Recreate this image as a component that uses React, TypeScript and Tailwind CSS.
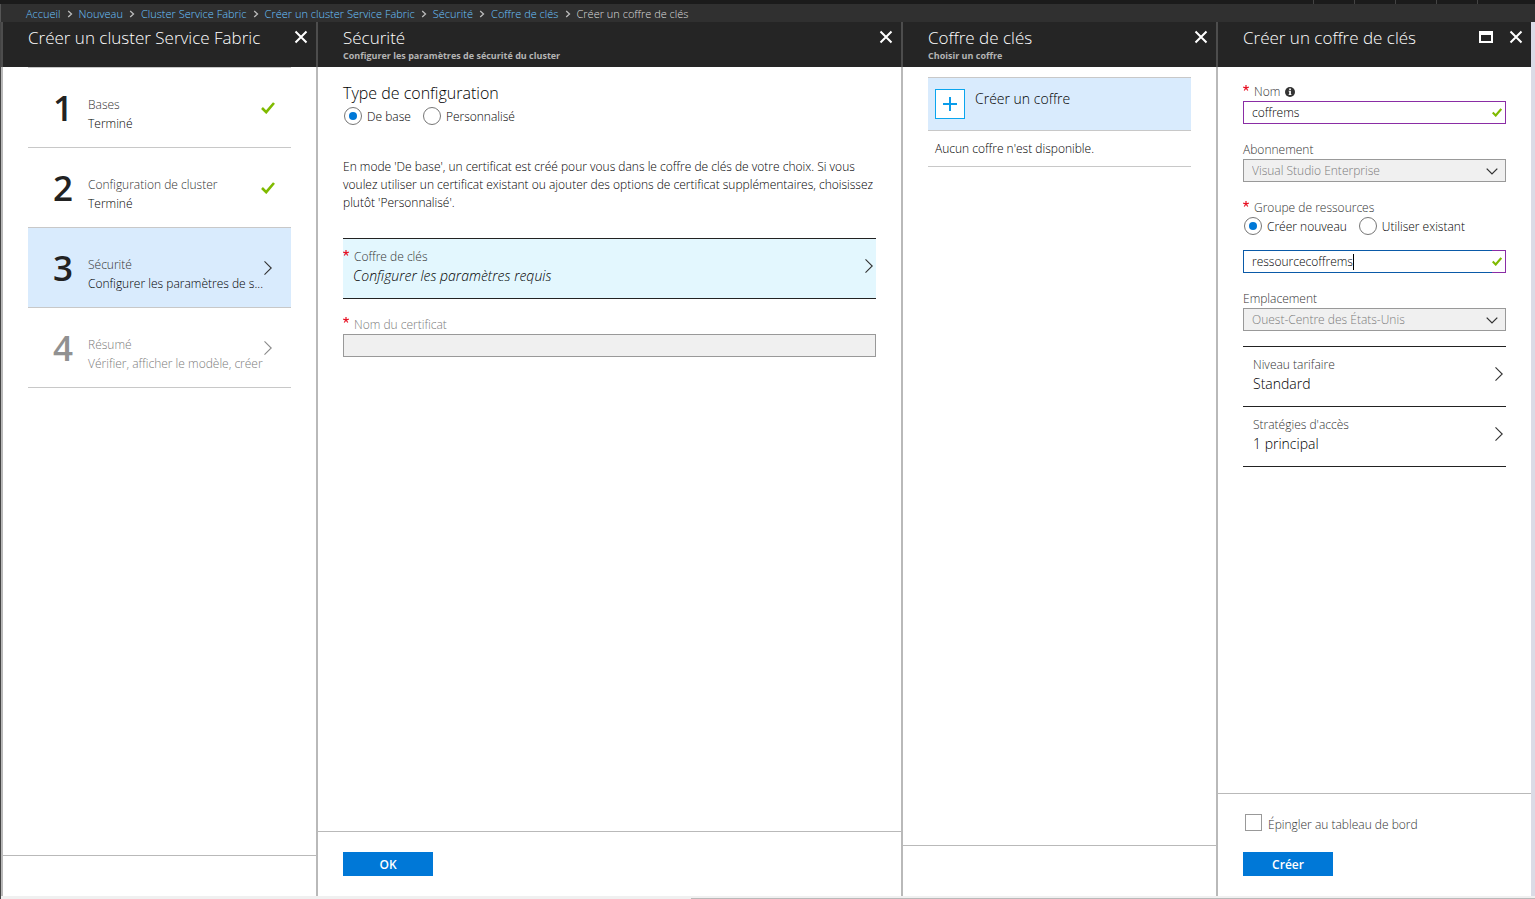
import { useId, type ReactNode } from 'react';

const breadcrumbs = [
  'Accueil',
  'Nouveau',
  'Cluster Service Fabric',
  'Créer un cluster Service Fabric',
  'Sécurité',
  'Coffre de clés',
];

function CloseIcon() {
  return (
    <svg width="14" height="14" viewBox="0 0 14 14" fill="none" stroke="#fff" strokeWidth="2" aria-hidden="true">
      <path d="M1.5 1.5 12.5 12.5M12.5 1.5 1.5 12.5" />
    </svg>
  );
}

function MaximizeIcon() {
  return (
    <svg width="14" height="12" viewBox="0 0 14 12" aria-hidden="true">
      <path fill="#fff" fillRule="evenodd" d="M0 0H14V12H0ZM2 4V10H12V4Z" />
    </svg>
  );
}

function BreadcrumbChevron() {
  return (
    <svg width="6" height="8" viewBox="0 0 6 8" fill="none" stroke="#bbb" strokeWidth="1.3" aria-hidden="true">
      <path d="M1.2 1 4.5 4 1.2 7" />
    </svg>
  );
}

function ChevronRight({ color = '#333' }: { color?: string }) {
  return (
    <svg className="shrink-0" width="8" height="14" viewBox="0 0 8 14" fill="none" stroke={color} strokeWidth="1.1" aria-hidden="true">
      <path d="M.5 .4 7.2 7 .5 13.6" />
    </svg>
  );
}

function ChevronDown() {
  return (
    <svg width="12" height="7" viewBox="0 0 12 7" fill="none" stroke="#333" strokeWidth="1.3" aria-hidden="true">
      <path d="M.7 .6 6 5.9 11.3 .6" />
    </svg>
  );
}

function Check({ small = false }: { small?: boolean }) {
  return (
    <svg className="shrink-0" width={small ? 10 : 14} height={small ? 9 : 12} viewBox="0 0 14 12" fill="none" stroke="#7fba00" strokeWidth={small ? 3 : 2.6} aria-hidden="true">
      <path d="M1 6 5.2 10.2 13 1" />
    </svg>
  );
}

function InfoIcon() {
  return (
    <svg width="10" height="10" viewBox="0 0 10 10" aria-hidden="true">
      <circle cx="5" cy="5" r="5" fill="#333" />
      <path fill="#fff" d="M4.2 1.6H5.9V3H4.2ZM3.6 3.8H5.9V7.2H6.5V8H3.6V7.2H4.2V4.6H3.6Z" />
    </svg>
  );
}

function Required() {
  return (
    <svg className="mt-[2px] shrink-0 self-start" width="6" height="6" viewBox="0 0 6 6" stroke="#e81123" strokeWidth="1.2" aria-hidden="true">
      <path d="M3 0V3M.2 2.2 3 3M5.8 2.2 3 3M1.2 5.5 3 3M4.8 5.5 3 3" />
    </svg>
  );
}

function Blade({
  title,
  subtitle,
  className,
  maximize,
  footer,
  footerClass,
  children,
}: {
  title: string;
  subtitle?: string;
  className: string;
  maximize?: boolean;
  footer?: ReactNode;
  footerClass: string;
  children: ReactNode;
}) {
  return (
    <section className={`flex flex-col ${className}`}>
      <header className="flex h-[45px] shrink-0 items-start justify-between border-l-2 border-[#4d4d4d] bg-[#252525] pr-2 pl-[25px]">
        <div className="pt-1">
          <h2 className="text-[17px] leading-6 text-white">{title}</h2>
          {subtitle && <p className="text-[9px] leading-3 font-bold text-[#b4b4b4]">{subtitle}</p>}
        </div>
        <div className="flex items-center gap-4 pt-2">
          {maximize && (
            <button type="button" aria-label="Agrandir">
              <MaximizeIcon />
            </button>
          )}
          <button type="button" aria-label="Fermer">
            <CloseIcon />
          </button>
        </div>
      </header>
      <div className="flex flex-1 flex-col border-l-2 border-[#b9b9b9]">
        <div className="flex-1 px-[25px]">{children}</div>
        <footer className={`border-t border-[#b9b9b9] px-[25px] ${footerClass}`}>{footer}</footer>
      </div>
    </section>
  );
}

function Step({ n, title, detail, state }: { n: number; title: string; detail: string; state: 'done' | 'active' | 'todo' }) {
  const tone = state === 'active' ? 'bg-[#d9ebfd]' : 'bg-white';
  const muted = state === 'todo';
  return (
    <li className="border-b border-[#c8c8c8]">
      <button
        type="button"
        disabled={muted}
        className={`flex h-[79px] w-full items-center pr-[15px] pl-[25px] text-left ${tone}`}
      >
        <span className={`w-[35px] shrink-0 pt-[2px] text-[35px] font-semibold ${muted ? 'text-[#919191]' : 'text-[#222]'}`}>{n}</span>
        <span className="flex min-w-0 flex-1 flex-col pt-3 text-xs leading-[19px] whitespace-nowrap">
          <span className={muted ? 'text-[#7c7c7c]' : 'text-[#333]'}>{title}</span>
          <span className={muted ? 'text-[#7c7c7c]' : 'text-black'}>{detail}</span>
        </span>
        <span className="flex w-4 shrink-0 justify-center">
          {state === 'done' ? <Check /> : <ChevronRight color={muted ? '#8a8a8a' : '#333'} />}
        </span>
      </button>
    </li>
  );
}

function Radio({ name, label, checked }: { name: string; label: string; checked?: boolean }) {
  return (
    <label className="flex items-start gap-[5px] text-xs leading-5 text-black">
      <input
        type="radio"
        name={name}
        defaultChecked={checked}
        className="grid h-[18px] w-[18px] appearance-none place-items-center rounded-full border border-[#767676] bg-white before:h-2 before:w-2 before:rounded-full checked:before:bg-[#0078d7]"
      />
      {label}
    </label>
  );
}

function SelectField({ label, value, className }: { label: string; value: string; className: string }) {
  const id = useId();
  return (
    <div className={className}>
      <label htmlFor={id} className="block text-xs leading-[18px] text-[#333]">
        {label}
      </label>
      <div className="relative">
        <select
          id={id}
          disabled
          className="block h-[23px] w-full appearance-none border border-[#999] bg-[#f0f0f0] pl-2 text-xs text-[#7c7c7c] opacity-100"
        >
          <option>{value}</option>
        </select>
        <span className="pointer-events-none absolute inset-y-0 right-2 flex items-center pt-px">
          <ChevronDown />
        </span>
      </div>
    </div>
  );
}

function LinkRow({ label, value }: { label: string; value: string }) {
  return (
    <button type="button" className="flex h-[60px] w-full items-center justify-between border-b border-[#222] pr-[3px] pb-[5px] pl-[10px] text-left">
      <span className="flex flex-col pt-[2px]">
        <span className="text-xs leading-[18px] text-[#333]">{label}</span>
        <span className="text-sm leading-5 text-black">{value}</span>
      </span>
      <ChevronRight />
    </button>
  );
}

const primaryButton = 'block h-6 w-[90px] bg-[#0078d7] pt-px text-xs font-semibold text-white';

export default function App() {
  return (
    <div className="flex min-h-screen flex-col bg-white font-['Open_Sans','Noto_Sans',sans-serif] font-light text-black">
      <div className="flex h-1 justify-end bg-[#1b1b1b] pr-[17px]">
        {[0, 1, 2, 3, 4].map((i) => (
          <span key={i} className="w-[41px] border-l border-[#444]" />
        ))}
      </div>
      <nav aria-label="Fil d'Ariane" className="h-[18px] border-l border-[#555] bg-[#303030] pl-[25px]">
        <ol className="flex items-center gap-[6px] text-[11px] leading-5">
          {breadcrumbs.map((b) => (
            <li key={b} className="flex items-center gap-[6px]">
              <a href="#" className="text-[#6cc4ff]">
                {b}
              </a>
              <BreadcrumbChevron />
            </li>
          ))}
          <li className="text-[#ddd]" aria-current="page">
            Créer un coffre de clés
          </li>
        </ol>
      </nav>

      <main className="flex flex-1 border-r-4 border-l border-r-[#dadbe6] border-l-[#444]">
        <Blade title="Créer un cluster Service Fabric" className="w-[315px] shrink-0" footerClass="h-[41px]">
          <ol className="border-t border-[#c8c8c8]">
            <Step n={1} title="Bases" detail="Terminé" state="done" />
            <Step n={2} title="Configuration de cluster" detail="Terminé" state="done" />
            <Step n={3} title="Sécurité" detail="Configurer les paramètres de s..." state="active" />
            <Step n={4} title="Résumé" detail="Vérifier, afficher le modèle, créer" state="todo" />
          </ol>
        </Blade>

        <Blade
          title="Sécurité"
          subtitle="Configurer les paramètres de sécurité du cluster"
          className="min-w-0 flex-1"
          footerClass="h-[65px] pt-5"
          footer={
            <button type="button" className={primaryButton}>
              OK
            </button>
          }
        >
          <fieldset className="pt-[15px]">
            <legend className="contents text-base">
              <span className="block leading-[22px]">Type de configuration</span>
            </legend>
            <div className="flex gap-3 pt-[3px] pl-px">
              <Radio name="config" label="De base" checked />
              <Radio name="config" label="Personnalisé" />
            </div>
          </fieldset>
          <p className="mt-[31px] text-xs leading-[18px]">
            En mode 'De base', un certificat est créé pour vous dans le coffre de clés de votre choix. Si vous voulez
            utiliser un certificat existant ou ajouter des options de certificat supplémentaires, choisissez plutôt
            'Personnalisé'.
          </p>
          <button
            type="button"
            className="mt-[26px] flex h-[61px] w-full items-center justify-between border-y border-[#222] bg-[#e3f7fe] pr-[3px] pb-[5px] text-left"
          >
            <span className="flex flex-col pt-[2px]">
              <span className="flex items-center gap-[5px] text-xs leading-[18px] text-[#333]">
                <Required />
                Coffre de clés
              </span>
              <span className="pl-[10px] text-sm leading-5 text-black italic">Configurer les paramètres requis</span>
            </span>
            <ChevronRight />
          </button>
          <label htmlFor="cert" className="mt-4 flex items-center gap-[5px] text-xs leading-[19px] text-[#7c7c7c]">
            <Required />
            Nom du certificat
          </label>
          <input id="cert" disabled className="block h-[23px] w-full border border-[#999] bg-[#f0f0f0] px-2 text-xs" />
        </Blade>

        <Blade title="Coffre de clés" subtitle="Choisir un coffre" className="w-[315px] shrink-0" footerClass="h-[51px]">
          <button
            type="button"
            className="mt-[10px] flex h-[54px] w-full items-center gap-[10px] border-y border-[#c8c8c8] bg-[#d9ebfd] px-[7px] text-left"
          >
            <span className="flex h-[30px] w-[30px] items-center justify-center border border-[#0aa5ee] bg-white">
              <svg width="14" height="14" viewBox="0 0 14 14" stroke="#0a9cea" strokeWidth="2" aria-hidden="true">
                <path d="M7 0V14M0 7H14" />
              </svg>
            </span>
            <span className="self-start pt-[11px] text-sm leading-5">Créer un coffre</span>
          </button>
          <p className="border-b border-[#c8c8c8] px-[7px] py-[9px] text-xs leading-[17px]">Aucun coffre n'est disponible.</p>
        </Blade>

        <Blade
          title="Créer un coffre de clés"
          maximize
          className="w-[315px] shrink-0"
          footerClass="h-[103px] pt-5"
          footer={
            <>
              <label className="flex h-[18px] items-start gap-[6px] pl-[2px] text-xs leading-[22px] text-[#333]">
                <input type="checkbox" className="h-[17px] w-[17px] appearance-none border border-[#999] bg-white" />
                Épingler au tableau de bord
              </label>
              <button type="button" className={`mt-5 ${primaryButton}`}>
                Créer
              </button>
            </>
          }
        >
          <div className="pt-4">
            <div className="flex items-center gap-[5px] text-xs leading-[18px] text-[#333]">
              <Required />
              <label htmlFor="name">Nom</label>
              <InfoIcon />
            </div>
            <div className="flex h-[23px] items-center border border-[#8a2da5] pr-[3px] pl-2">
              <input id="name" defaultValue="coffrems" className="min-w-0 flex-1 text-xs text-black outline-none" />
              <Check small />
            </div>
          </div>
          <SelectField label="Abonnement" value="Visual Studio Enterprise" className="mt-[17px]" />
          <fieldset className="mt-[17px]">
            <legend className="contents">
              <span className="flex items-center gap-[5px] text-xs leading-[18px] text-[#333]">
                <Required />
                Groupe de ressources
              </span>
            </legend>
            <div className="flex gap-3 pl-px">
              <Radio name="group" label="Créer nouveau" checked />
              <Radio name="group" label="Utiliser existant" />
            </div>
            <div className="mt-[13px] flex h-[23px]">
              <div className="flex flex-1 items-center border-y border-l border-[#0a5aa8] pl-2">
                <input
                  aria-label="Nom du groupe de ressources"
                  defaultValue="ressourcecoffrems"
                  className="field-sizing-content text-xs text-black outline-none"
                />
                <span className="h-4 w-px bg-black" />
              </div>
              <div className="flex w-[14px] items-center border-y border-r border-[#8a2da5]">
                <Check small />
              </div>
            </div>
          </fieldset>
          <SelectField label="Emplacement" value="Ouest-Centre des États-Unis" className="mt-[17px]" />
          <div className="mt-[15px] border-t border-[#222]">
            <LinkRow label="Niveau tarifaire" value="Standard" />
            <LinkRow label="Stratégies d'accès" value="1 principal" />
          </div>
        </Blade>
      </main>
      <div className="flex h-[3px] flex-col justify-end border-l border-[#444] bg-[#f0f0f0]">
        <div className="h-px w-[55%] self-end bg-[#b9b9b9]" />
      </div>
    </div>
  );
}
